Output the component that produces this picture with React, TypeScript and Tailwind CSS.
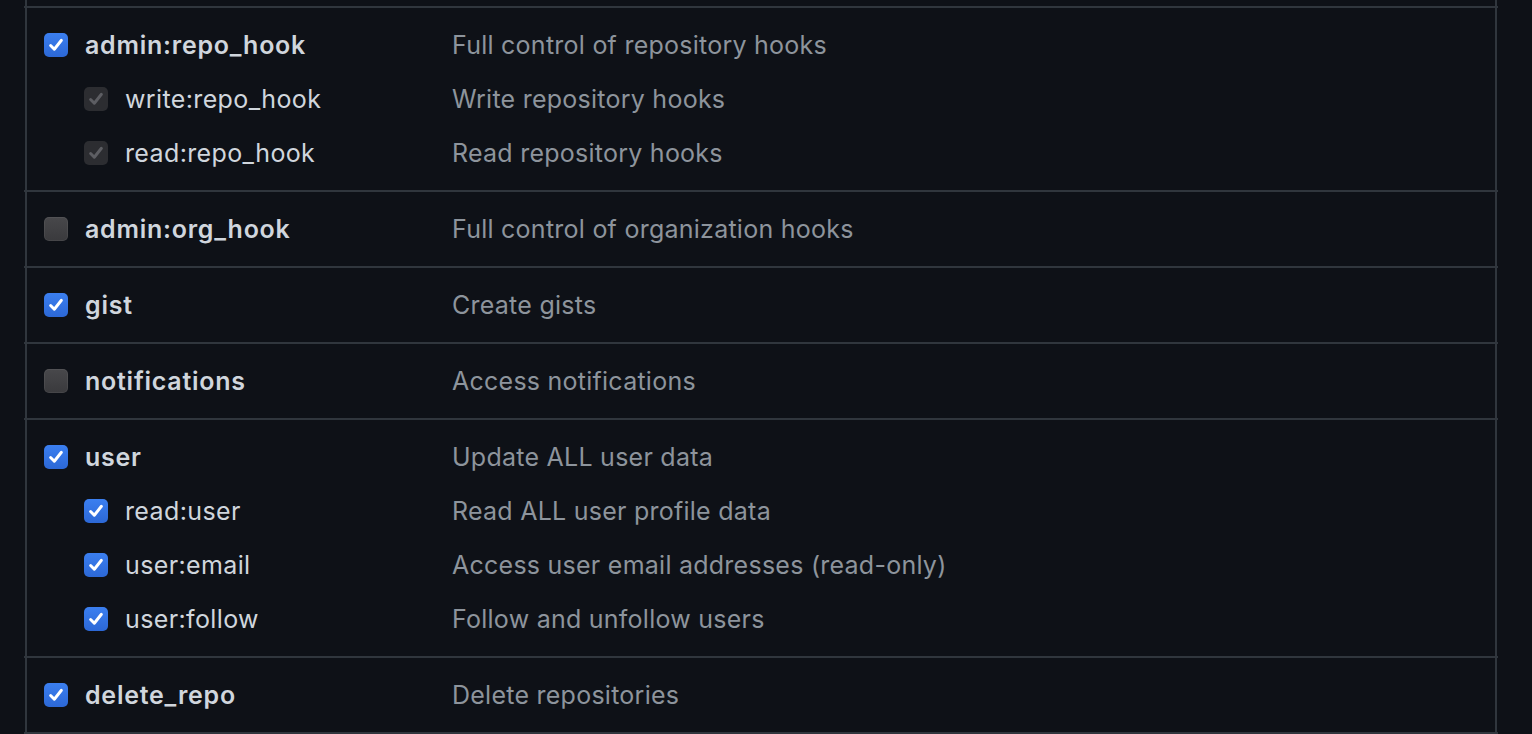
type Scope = {
  name: string;
  desc: string;
  state: "on" | "off" | "implied";
  sub?: boolean;
};

const groups: Scope[][] = [
  [
    { name: "admin:repo_hook", desc: "Full control of repository hooks", state: "on" },
    { name: "write:repo_hook", desc: "Write repository hooks", state: "implied", sub: true },
    { name: "read:repo_hook", desc: "Read repository hooks", state: "implied", sub: true },
  ],
  [{ name: "admin:org_hook", desc: "Full control of organization hooks", state: "off" }],
  [{ name: "gist", desc: "Create gists", state: "on" }],
  [{ name: "notifications", desc: "Access notifications", state: "off" }],
  [
    { name: "user", desc: "Update ALL user data", state: "on" },
    { name: "read:user", desc: "Read ALL user profile data", state: "on", sub: true },
    { name: "user:email", desc: "Access user email addresses (read-only)", state: "on", sub: true },
    { name: "user:follow", desc: "Follow and unfollow users", state: "on", sub: true },
  ],
  [{ name: "delete_repo", desc: "Delete repositories", state: "on" }],
];

const Check = ({ state }: { state: Scope["state"] }) => {
  if (state === "off") {
    return (
      <span className="w-6 h-6 rounded-[5px] bg-gradient-to-b from-[#48484b] to-[#3a3a3d] shadow-[inset_0_0_0_1px_rgba(255,255,255,0.06)]" />
    );
  }
  const on = state === "on";
  return (
    <span
      className={
        on
          ? "w-6 h-6 rounded-[5px] bg-gradient-to-b from-[#3b7ff0] to-[#2c68d6] flex items-center justify-center"
          : "w-6 h-6 rounded-[5px] bg-[#2c2d31] flex items-center justify-center"
      }
    >
      <svg width="18" height="18" viewBox="0 0 16 16" fill="none">
        <path
          d="M3.2 8.4 L6.5 11.8 L12.8 3.8"
          stroke={on ? "#ffffff" : "#5d5e63"}
          strokeWidth="2.6"
          strokeLinecap="round"
          strokeLinejoin="round"
        />
      </svg>
    </span>
  );
};

const Row = ({ s }: { s: Scope }) => (
  <div className="flex items-center h-[54px]">
    <div className={s.sub ? "flex items-center w-[425px] pl-[57px]" : "flex items-center w-[425px] pl-[17px]"}>
      <Check state={s.state} />
      <span
        className={
          s.sub
            ? "ml-[17px] pt-[2px] text-[25px] tracking-[0.015em] text-[#d0d6dd]"
            : "ml-[17px] pt-[2px] text-[25px] tracking-[0.03em] font-semibold text-[#d0d6dd]"
        }
      >
        {s.name}
      </span>
    </div>
    <span className="pt-[2px] text-[25px] tracking-[0.01em] text-[#8d949c]">{s.desc}</span>
  </div>
);

export default function App() {
  return (
    <div
      className="w-[1532px] h-[734px] overflow-hidden bg-[#0e1117]"
      style={{ fontFamily: "Inter, 'Noto Sans', sans-serif" }}
    >
      <div className="ml-[24px] w-[1474px]">
        <div className="mx-px border-x-2 border-[#30363d]">
          <div className="h-[6px]" />
          {groups.map((g, i) => (
            <div key={i} className="-mx-[3px] border-t-2 border-[#30363d]">
              <div className="mx-[3px] py-[10px]">
                {g.map((s) => (
                  <Row key={s.name} s={s} />
                ))}
              </div>
            </div>
          ))}
          <div className="-mx-[3px] border-t-2 border-[#30363d]" />
        </div>
      </div>
    </div>
  );
}
